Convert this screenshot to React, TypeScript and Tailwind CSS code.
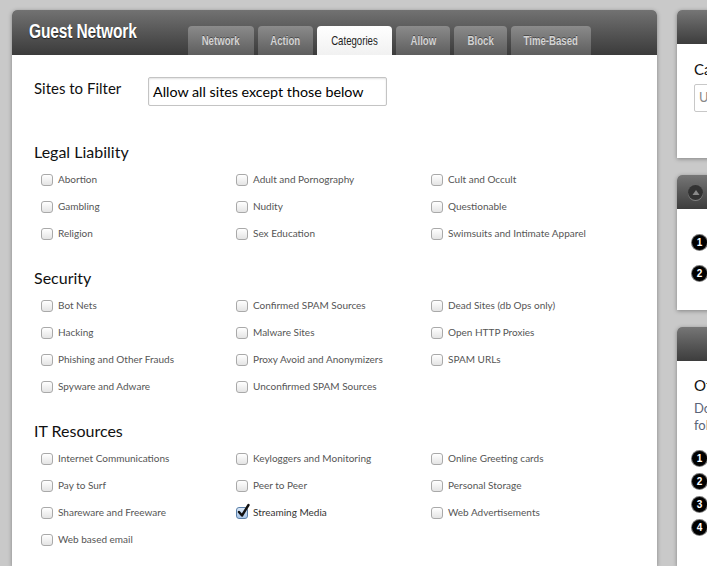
import React from 'react';

const tabs = [
  { label: 'Network', w: 'w-[66px]' },
  { label: 'Action', w: 'w-[55px]' },
  { label: 'Categories', w: 'w-[75px]', active: true },
  { label: 'Allow', w: 'w-[54px]' },
  { label: 'Block', w: 'w-[53px]' },
  { label: 'Time-Based', w: 'w-[80px]' },
];

const sections = [
  {
    title: 'Legal Liability',
    items: ['Abortion', 'Adult and Pornography', 'Cult and Occult', 'Gambling', 'Nudity', 'Questionable', 'Religion', 'Sex Education', 'Swimsuits and Intimate Apparel'],
  },
  {
    title: 'Security',
    items: ['Bot Nets', 'Confirmed SPAM Sources', 'Dead Sites (db Ops only)', 'Hacking', 'Malware Sites', 'Open HTTP Proxies', 'Phishing and Other Frauds', 'Proxy Avoid and Anonymizers', 'SPAM URLs', 'Spyware and Adware', 'Unconfirmed SPAM Sources'],
  },
  {
    title: 'IT Resources',
    items: ['Internet Communications', 'Keyloggers and Monitoring', 'Online Greeting cards', 'Pay to Surf', 'Peer to Peer', 'Personal Storage', 'Shareware and Freeware', 'Streaming Media', 'Web Advertisements', 'Web based email'],
  },
];

const checked = ['Streaming Media'];

const Checkbox: React.FC<{ on?: boolean }> = ({ on }) => (
  <span
    className={`w-[12px] h-[12px] shrink-0 rounded-[3px] border flex items-center justify-center ${
      on ? 'border-[#5a7fa8] bg-gradient-to-b from-[#dbe8f7] to-[#a9c6e8]' : 'border-[#a9a9a9] bg-gradient-to-b from-white to-[#e4e4e4]'
    }`}
  >
    {on && (
      <svg width="13" height="14" viewBox="0 0 13 14" className="-mt-[4px] ml-[2px] overflow-visible">
        <path d="M2 8 L5 11.5 L11.5 1" fill="none" stroke="#111" strokeWidth="2.4" strokeLinecap="round" strokeLinejoin="round" />
      </svg>
    )}
  </span>
);

const Num: React.FC<{ n: number }> = ({ n }) => (
  <span className="w-[15px] h-[15px] shrink-0 rounded-full bg-black text-white text-[10px] font-bold leading-none flex items-center justify-center shadow-[0_0_0_1px_#777] font-['Liberation_Sans',sans-serif]">
    {n}
  </span>
);

const SideHeader: React.FC<{ children?: React.ReactNode }> = ({ children }) => (
  <div className="h-[34px] rounded-t-[5px] bg-gradient-to-b from-[#767676] to-[#3d3d3d] flex items-center pl-[11px]">{children}</div>
);

export default function App() {
  return (
    <div className="w-[707px] h-[566px] overflow-hidden bg-[#c9c9c9] flex gap-[20px] pl-[12px] pt-[10px] font-['Lato',sans-serif]">
      <div className="w-[645px] shrink-0 rounded-t-[5px] bg-white shadow-[0_1px_4px_rgba(0,0,0,0.35)]">
        <div className="h-[45px] rounded-t-[5px] bg-gradient-to-b from-[#727272] to-[#3b3b3b] flex">
          <div className="w-[176px] shrink-0 pl-[17px] pt-[5px]">
            <span className="inline-block origin-left scale-x-[0.74] text-white font-bold text-[21px] tracking-[-0.2px] font-['Liberation_Sans',sans-serif] [text-shadow:0_1px_1px_rgba(0,0,0,0.6)]">
              Guest Network
            </span>
          </div>
          <div className="flex items-end gap-[4px]">
            {tabs.map(t => (
              <div
                key={t.label}
                className={`${t.w} h-[29px] rounded-t-[4px] flex items-center justify-center font-['Liberation_Sans',sans-serif] ${
                  t.active
                    ? 'bg-gradient-to-b from-white to-[#f1f1f1] text-[#222] text-[13px]'
                    : 'bg-gradient-to-b from-[#8b8b8b] to-[#5e5e5e] text-[#d4d4d4] text-[13px] font-bold [text-shadow:0_-1px_0_rgba(0,0,0,0.4)]'
                }`}
              >
                <span className={`inline-block whitespace-nowrap ${t.active ? 'scale-x-[0.74]' : 'scale-x-[0.74]'}`}>{t.label}</span>
              </div>
            ))}
          </div>
        </div>

        <div className="px-[22px] pt-[22px]">
          <div className="flex items-start">
            <div className="w-[114px] text-[15px] leading-[22px] text-[#111]">Sites to Filter</div>
            <div className="w-[239px] h-[29px] border border-[#c4c4c4] rounded-[2px] shadow-[inset_0_1px_2px_rgba(0,0,0,0.12)] flex items-center px-[4px] text-[14.3px] text-black">
              Allow all sites except those below
            </div>
          </div>

          {sections.map((s, i) => (
            <div key={s.title} className={i === 0 ? 'mt-[36px]' : 'mt-[21px]'}>
              <div className="h-[20px] flex items-center text-[16px] text-[#111]">{s.title}</div>
              <div className="grid grid-cols-[195px_195px_195px] mt-[4px]">
                {s.items.map(item => (
                  <div key={item} className="h-[27px] flex items-center gap-[5px] pl-[7px] text-[10px] text-[#555]">
                    <Checkbox on={checked.includes(item)} />
                    <span className={checked.includes(item) ? 'text-[#333]' : ''}>{item}</span>
                  </div>
                ))}
              </div>
            </div>
          ))}
        </div>
      </div>

      <div className="w-[260px] shrink-0 flex flex-col gap-[17px]">
        <div className="rounded-t-[5px] bg-white shadow-[0_1px_4px_rgba(0,0,0,0.35)]">
          <SideHeader />
          <div className="h-[114px] pl-[17px] pt-[16px]">
            <div className="text-[15px] text-[#111] leading-[18px]">Category Lookup</div>
            <div className="mt-[6px] w-[200px] h-[28px] border border-[#c8c8c8] rounded-[2px] flex items-center px-[4px] text-[13px] text-[#888]">
              URL to check
            </div>
          </div>
        </div>

        <div className="rounded-t-[5px] bg-white shadow-[0_1px_4px_rgba(0,0,0,0.35)]">
          <SideHeader>
            <span className="w-[15px] h-[15px] rounded-full bg-[#333] shadow-[0_1px_0_rgba(255,255,255,0.3)] flex items-center justify-center">
              <svg width="8" height="7" viewBox="0 0 8 7">
                <path d="M4 1 L7.5 6 L0.5 6 Z" fill="#8a8a8a" />
              </svg>
            </span>
          </SideHeader>
          <div className="h-[101px] pl-[15px] pt-[26px] flex flex-col gap-[16px] text-[13px] text-[#333]">
            <div className="h-[15px] flex items-center gap-[6px]"><Num n={1} />Select categories</div>
            <div className="h-[15px] flex items-center gap-[6px]"><Num n={2} />Save changes</div>
          </div>
        </div>

        <div className="flex-1 rounded-t-[5px] bg-white shadow-[0_1px_4px_rgba(0,0,0,0.35)]">
          <SideHeader />
          <div className="pl-[17px] pt-[15px]">
            <div className="text-[15px] text-[#111] leading-[18px]">Other Options</div>
            <div className="mt-[6px] text-[13px] leading-[17px] text-[#5a6478]">
              Don't see the category? Use the
              <br />
              following steps to add it.
            </div>
            <div className="mt-[17px] -ml-[2px] flex flex-col gap-[8px] text-[13px] text-[#333]">
              <div className="h-[15px] flex items-center gap-[6px]"><Num n={1} />Open Allow tab</div>
              <div className="h-[15px] flex items-center gap-[6px]"><Num n={2} />Add the site</div>
              <div className="h-[15px] flex items-center gap-[6px]"><Num n={3} />Choose action</div>
              <div className="h-[15px] flex items-center gap-[6px]"><Num n={4} />Save changes</div>
            </div>
          </div>
        </div>
      </div>
    </div>
  );
}
